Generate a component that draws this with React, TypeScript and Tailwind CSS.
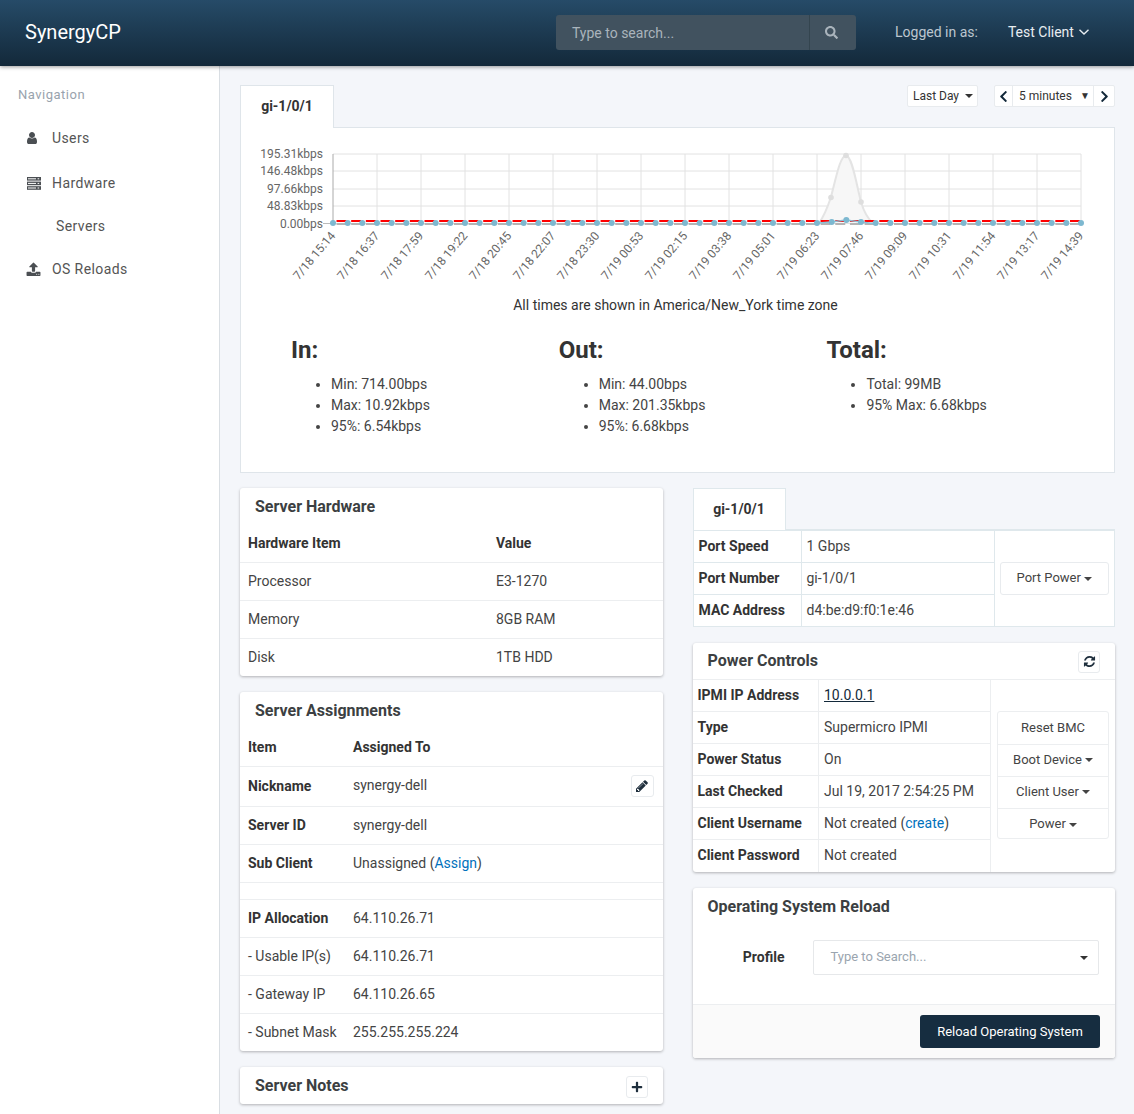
import React from "react";
import { FaSearch, FaChevronLeft, FaChevronRight, FaPlus } from "react-icons/fa";

const Fa4 = ({ d, className = "" }: { d: string; className?: string }) => (
  <svg viewBox="0 0 1792 1792" fill="currentColor" className={className}><path d={d} /></svg>
);
const USER = "M1536 1399q0 109-62.5 187t-150.5 78h-854q-88 0-150.5-78t-62.5-187q0-85 8.5-160.5t31.5-151.5 58.5-130 94-88.5 134.5-34.5q131 128 313 128t313-128q76 0 134.5 34.5t94 88.5 58.5 130 31.5 151.5 8.5 160.5zm-256-887q0 159-112.5 271.5t-271.5 112.5-271.5-112.5-112.5-271.5 112.5-271.5 271.5-112.5 271.5 112.5 112.5 271.5z";
const UPLOAD = "M1344 1472q0-26-19-45t-45-19-45 19-19 45 19 45 45 19 45-19 19-45zm256 0q0-26-19-45t-45-19-45 19-19 45 19 45 45 19 45-19 19-45zm128-224v320q0 40-28 68t-68 28h-1472q-40 0-68-28t-28-68v-320q0-40 28-68t68-28h427q21 56 70.5 92t110.5 36h256q61 0 110.5-36t70.5-92h427q40 0 68 28t28 68zm-325-648q-17 40-59 40h-256v448q0 26-19 45t-45 19h-256q-26 0-45-19t-19-45v-448h-256q-42 0-59-40-17-39 14-69l448-448q18-19 45-19t45 19l448 448q31 30 14 69z";
const REFRESH = "M1639 1056q0 5-1 7-64 268-268 434.5t-478 166.5q-146 0-282.5-55t-243.5-157l-129 129q-19 19-45 19t-45-19-19-45v-448q0-26 19-45t45-19h448q26 0 45 19t19 45-19 45l-137 137q71 66 161 102t187 36q134 0 250-65t186-179q11-17 53-117 8-23 30-23h192q13 0 22.5 9.5t9.5 22.5zm25-800v448q0 26-19 45t-45 19h-448q-26 0-45-19t-19-45 19-45l138-138q-148-137-349-137-134 0-250 65t-186 179q-11 17-53 117-8 23-30 23h-199q-13 0-22.5-9.5t-9.5-22.5v-7q65-268 270-434.5t480-166.5q146 0 284 55.5t245 156.5l130-129q19-19 45-19t45 19 19 45z";
const PENCIL = "M491 1536l91-91-235-235-91 91v107h128v128h107zm523-928q0-22-22-22-10 0-17 7l-542 542q-7 7-7 17 0 22 22 22 10 0 17-7l542-542q7-7 7-17zm-54-192l416 416-832 832h-416v-416zm683 96q0 53-37 90l-166 166-416-416 166-165q36-38 90-38 53 0 91 38l235 234q37 39 37 91z";

const ServerIcon = ({ className = "" }: { className?: string }) => (
  <svg viewBox="0 0 14 13" className={className}>
    {[0, 4.6, 9.2].map((y) => (
      <g key={y}>
        <rect x={0} y={y} width={14} height={3.6} fill="currentColor" />
        <rect x={1} y={y + 1.3} width={8} height={1} fill="#fff" />
        <rect x={10.6} y={y + 1.3} width={1.6} height={1} fill="#fff" />
      </g>
    ))}
  </svg>
);

const Caret = () => (
  <span className="inline-block w-0 h-0 border-t-current border-x-transparent align-middle border-x-[4px] border-t-[4px]" />
);

const labels = ["7/18 15:14","7/18 16:37","7/18 17:59","7/18 19:22","7/18 20:45","7/18 22:07","7/18 23:30","7/19 00:53","7/19 02:15","7/19 03:38","7/19 05:01","7/19 06:23","7/19 07:46","7/19 09:09","7/19 10:31","7/19 11:54","7/19 13:17","7/19 14:39"];
const yTicks: [string, number][] = [["195.31kbps",154],["146.48kbps",171],["97.66kbps",189],["48.83kbps",206],["0.00bps",223.5]];
const blueY: Record<number, number> = { 34: 222, 35: 220, 36: 222 };

function Chart() {
  const xs = labels.map((_, i) => 333 + i * 44);
  const pts = Array.from({ length: 52 }, (_, i) => 333 + (i * 44) / 3);
  return (
    <svg viewBox="241 140 873 150" className="block w-[873px] h-[150px]">
      {yTicks.map(([t, y]) => (
        <g key={t}>
          <line x1={333} x2={1081} y1={y} y2={y} stroke="#e2e2e2" strokeWidth={1} />
          <text x={323} y={y + 4} textAnchor="end" fontSize={12} fill="#666" fontFamily="Roboto, sans-serif">{t}</text>
        </g>
      ))}
      <line x1={323} x2={333} y1={223.5} y2={223.5} stroke="#bbb" strokeWidth={1} />
      {xs.map((x) => (
        <line key={x} x1={x} x2={x} y1={154} y2={223.5} stroke={x === 333 ? "#aaa" : "#e2e2e2"} strokeWidth={1} />
      ))}
      {xs.map((x, i) => (
        <text key={i} x={x + 3} y={236} textAnchor="end" fontSize={12} fill="#666" fontFamily="Roboto, sans-serif" transform={`rotate(-50 ${x + 3} 236)`}>{labels[i]}</text>
      ))}
      <path d="M819 223 C825 215 828 206 831 197 C836 178 840 156 846 155.5 C852 156 856 182 861 202 C864 212 868 219 873 223 Z" fill="#f7f7f7" />
      <path d="M819 223 C825 215 828 206 831 197 C836 178 840 156 846 155.5 C852 156 856 182 861 202 C864 212 868 219 873 223" fill="none" stroke="#e4e4e4" strokeWidth={2} />
      {[[831,197.5],[846,155.5],[861,202]].map(([x,y]) => <circle key={x} cx={x} cy={y} r={2.8} fill="#dedede" />)}
      <line x1={334} x2={1081} y1={221} y2={221} stroke="#ff0000" strokeWidth={2} strokeDasharray="10 4.67" strokeDashoffset={-2.5} />
      <line x1={334} x2={1081} y1={224} y2={224} stroke="#b4b4b4" strokeWidth={2} strokeDasharray="10 4.67" strokeDashoffset={-2.5} />
      <path d="M819 223 L831 222 L846 220 L861 222 L873 223.5" fill="none" stroke="#8dc1d6" strokeWidth={1.5} />
      {pts.map((x, i) => (
        <circle key={i} cx={x} cy={blueY[i] ?? 223} r={3} fill="#7db8d0" />
      ))}
    </svg>
  );
}

const Stat = ({ title, items }: { title: string; items: string[] }) => (
  <div className="w-[267.7px]">
    <h3 className="text-2xl leading-[28px] font-bold text-[#333]">{title}</h3>
    <ul className="list-disc pl-[40px] mt-[10px] text-sm leading-[21px] text-[#444]">
      {items.map((t) => <li key={t}>{t}</li>)}
    </ul>
  </div>
);

const Card = ({ children, className = "" }: { children: React.ReactNode; className?: string }) => (
  <div className={`bg-white rounded-[3px] shadow-[0_1px_3px_rgba(0,0,0,0.28)] ${className}`}>{children}</div>
);

const Title = ({ children }: { children: React.ReactNode }) => (
  <div className="flex items-center justify-between pl-[15px] pr-[15px] h-[37px]">
    <h3 className="text-base font-bold text-[#3c3f42]">{children}</h3>
  </div>
);

const SmallBtn = ({ children, className = "" }: { children: React.ReactNode; className?: string }) => (
  <button className={`w-[22px] h-[22px] flex items-center justify-center bg-white border border-[#e8ebee] rounded-[3px] text-[#1f2f3d] text-[12px] ${className}`}>{children}</button>
);

const A = ({ children }: { children: React.ReactNode }) => <a className="text-[#0071bc]">{children}</a>;

function App() {
  return (
    <div className="h-[1114px] overflow-hidden flex flex-col bg-[#f4f6fa] font-['Roboto',sans-serif] text-sm text-[#444]">
      <header className="relative z-10 h-[66px] shrink-0 flex items-center bg-gradient-to-b from-[#264b68] to-[#13293a] shadow-[0_1px_4px_rgba(0,0,0,0.4)] text-white">
        <div className="w-[556px] pl-[25px] text-[20px] leading-none pb-[3px]">SynergyCP</div>
        <div className="flex w-[300px] h-[35px] mb-[1px] bg-[#41525f] rounded-[3px] text-[#aab4bc]">
          <div className="flex-1 flex items-center pl-[16px] border-r border-[#34454f]">Type to search...</div>
          <div className="w-[46px] pr-[4px] flex items-center justify-center text-[13px]"><FaSearch /></div>
        </div>
        <div className="ml-[39px] text-[#bcc6cf] mb-[2px]">Logged in as:</div>
        <div className="ml-[30px] flex items-center gap-[5px] text-[#e8edf1] mb-[2px]">
          Test Client
          <svg viewBox="0 0 10 6" className="w-[10px] h-[6px]" fill="none" stroke="currentColor" strokeWidth={1.4}><path d="M0.5 0.7 L5 5 L9.5 0.7" /></svg>
        </div>
      </header>
      <div className="flex flex-1 min-h-0">
        <aside className="w-[220px] shrink-0 bg-white border-r border-[#d9dee3] pt-[20px] tracking-[0.4px] text-[#555]">
          <div className="pl-[18px] text-[13px] leading-[17px] text-[#99a3ad] tracking-[0.5px]">Navigation</div>
          <nav className="mt-[13px] flex flex-col">
            <div className="h-[44px] flex items-center pl-[25px]"><Fa4 d={USER} className="w-[14px] h-[14px] text-[#4b4f53] mr-[13px]" /><span>Users</span></div>
            <div className="h-[46px] flex items-center pl-[27px]"><ServerIcon className="w-[14px] h-[13px] text-[#4b4f53] mr-[11px]" /><span>Hardware</span></div>
            <div className="h-[40px] flex items-center pl-[56px]">Servers</div>
            <div className="h-[46px] flex items-center pl-[26px]"><Fa4 d={UPLOAD} className="w-[15px] h-[15px] text-[#4b4f53] mr-[11px]" /><span>OS Reloads</span></div>
          </nav>
        </aside>
        <main className="flex-1 min-w-0 pl-[20px] pr-[19px] pt-[19px]">
          <div className="flex items-start justify-between">
            <div className="h-[43px] w-[94px] pb-[2px] relative z-[1] -mb-px bg-white border border-[#dfe5ea] border-b-0 flex items-center justify-center font-bold text-[#333]">gi-1/0/1</div>
            <div className="flex items-center text-xs text-[#333]">
              <div className="h-[22px] w-[71px] flex items-center justify-center gap-[6px] pl-[1px] bg-white border border-[#e8ebee] rounded-[2px]">Last Day <Caret /></div>
              <div className="ml-[16px] h-[22px] flex bg-white border border-[#e8ebee] rounded-[2px]">
                <div className="w-[18px] flex items-center justify-center border-r border-[#e8ebee] text-[#13293a] text-[13px]"><FaChevronLeft /></div>
                <div className="w-[81px] flex items-center justify-between pl-[6px] pr-[3px] border-r border-[#e8ebee]">5 minutes <span className="text-[10px]">▼</span></div>
                <div className="w-[20px] flex items-center justify-center text-[#13293a] text-[13px]"><FaChevronRight /></div>
              </div>
            </div>
          </div>
          <section className="h-[346px] bg-white border border-[#dfe5ea] pt-[12px]">
            <Chart />
            <p className="mt-[5px] text-center text-[#333] leading-[20px] pr-[4px]">All times are shown in America/New_York time zone</p>
            <div className="flex pl-[50px] mt-[21px]">
              <Stat title="In:" items={["Min: 714.00bps","Max: 10.92kbps","95%: 6.54kbps"]} />
              <Stat title="Out:" items={["Min: 44.00bps","Max: 201.35kbps","95%: 6.68kbps"]} />
              <Stat title="Total:" items={["Total: 99MB","95% Max: 6.68kbps"]} />
            </div>
          </section>

          <div className="grid grid-cols-2 gap-x-[30px] mt-[15px] items-start">
            <div className="flex flex-col gap-[16px]">
              <Card>
                <Title>Server Hardware</Title>
                <table className="w-full border-collapse">
                  <tbody>
                    <tr className="h-[37px] font-bold text-[#333]"><td className="pl-[8px] w-[248px]">Hardware Item</td><td className="pl-[8px]">Value</td></tr>
                    {[["Processor","E3-1270"],["Memory","8GB RAM"],["Disk","1TB HDD"]].map(([a,b]) => (
                      <tr key={a} className="h-[38px] border-t border-[#eceef0]"><td className="pl-[8px]">{a}</td><td className="pl-[8px]">{b}</td></tr>
                    ))}
                  </tbody>
                </table>
              </Card>
              <Card>
                <Title>Server Assignments</Title>
                <table className="w-full border-collapse">
                  <tbody>
                    <tr className="h-[37px] font-bold text-[#333]"><td className="pl-[8px] w-[105px]">Item</td><td className="pl-[8px]" colSpan={2}>Assigned To</td></tr>
                    <tr className="h-[40px] border-t border-[#eceef0]">
                      <td className="pl-[8px] font-bold text-[#333]">Nickname</td>
                      <td className="pl-[8px] pb-[3px]">synergy-dell</td>
                      <td className="w-[40px] pl-[8px]"><SmallBtn className="w-[23px]"><Fa4 d={PENCIL} className="w-[14px] h-[14px]" /></SmallBtn></td>
                    </tr>
                    <tr className="h-[38px] border-t border-[#eceef0]"><td className="pl-[8px] font-bold text-[#333]">Server ID</td><td className="pl-[8px]" colSpan={2}>synergy-dell</td></tr>
                    <tr className="h-[38px] border-t border-[#eceef0]"><td className="pl-[8px] font-bold text-[#333]">Sub Client</td><td className="pl-[8px]" colSpan={2}>Unassigned (<A>Assign</A>)</td></tr>
                    <tr className="h-[17px] border-t border-[#eceef0]"><td colSpan={3} /></tr>
                    <tr className="h-[38px] border-t border-[#eceef0]"><td className="pl-[8px] font-bold text-[#333]">IP Allocation</td><td className="pl-[8px]" colSpan={2}>64.110.26.71</td></tr>
                    <tr className="h-[38px] border-t border-[#eceef0]"><td className="pl-[8px]">- Usable IP(s)</td><td className="pl-[8px]" colSpan={2}>64.110.26.71</td></tr>
                    <tr className="h-[38px] border-t border-[#eceef0]"><td className="pl-[8px]">- Gateway IP</td><td className="pl-[8px]" colSpan={2}>64.110.26.65</td></tr>
                    <tr className="h-[38px] border-t border-[#eceef0]"><td className="pl-[8px]">- Subnet Mask</td><td className="pl-[8px]" colSpan={2}>255.255.255.224</td></tr>
                  </tbody>
                </table>
              </Card>
              <Card>
                <div className="h-[37px] flex items-center justify-between pl-[15px] pr-[15px]">
                  <h3 className="text-base font-bold text-[#3c3f42]">Server Notes</h3>
                  <SmallBtn className="mt-[2px]"><FaPlus /></SmallBtn>
                </div>
              </Card>
            </div>

            <div className="flex flex-col">
              <div className="h-[42px] w-[93px] pb-[2px] relative z-[1] -mb-[1px] bg-white border border-[#dfe8ec] border-b-0 flex items-center justify-center font-bold text-[#333]">gi-1/0/1</div>
              <table className="w-full bg-white border-collapse border-t-2 border-[#dfe8ec]">
                <tbody>
                  {[["Port Speed","1 Gbps"],["Port Number","gi-1/0/1"],["MAC Address","d4:be:d9:f0:1e:46"]].map(([a,b],i) => (
                    <tr key={a} className="h-[32px]">
                      <td className="w-[108px] pl-[5px] border border-[#dfe8ec] font-bold text-[#333]">{a}</td>
                      <td className="w-[193px] pl-[5px] border border-[#dfe8ec]">{b}</td>
                      {i === 0 && (
                        <td rowSpan={3} className="border border-[#dfe8ec] px-[5px] pt-[1px]">
                          <button className="w-full h-[33px] flex items-center justify-center gap-[3px] text-[13px] border border-[#e8ebee] rounded-[3px]">Port Power <Caret /></button>
                        </td>
                      )}
                    </tr>
                  ))}
                </tbody>
              </table>

              <Card className="mt-[16px]">
                <div className="h-[36px] flex items-center justify-between pl-[15px] pr-[15px]">
                  <h3 className="text-base font-bold text-[#3c3f42]">Power Controls</h3>
                  <SmallBtn className="mt-[2px]"><Fa4 d={REFRESH} className="w-[13px] h-[13px]" /></SmallBtn>
                </div>
                <table className="w-full border-collapse">
                  <tbody>
                    {([["IPMI IP Address",<a className="underline text-[#13293a]">10.0.0.1</a>],["Type","Supermicro IPMI"],["Power Status","On"],["Last Checked","Jul 19, 2017 2:54:25 PM"],["Client Username",<>Not created (<A>create</A>)</>],["Client Password","Not created"]] as [string, React.ReactNode][]).map(([a,b],i) => (
                      <tr key={a} className={`border-t border-[#eceef0] ${i === 5 ? "h-[33px]" : "h-[32px]"}`}>
                        <td className="w-[126px] pl-[5px] pb-[1px] border-r border-[#eceef0] font-bold text-[#333]">{a}</td>
                        <td className="w-[172px] pl-[5px] pb-[1px] border-r border-[#eceef0]">{b}</td>
                        {i === 0 && (
                          <td rowSpan={6} className="align-top px-[6px] pt-[31px]">
                            <div className="flex flex-col border border-[#eceef0] rounded-[3px] text-[13px]">
                              <div className="h-[32px] pt-[2px] flex items-center justify-center">Reset BMC</div>
                              <div className="h-[32px] flex items-center justify-center gap-[3px] border-t border-[#eceef0]">Boot Device <Caret /></div>
                              <div className="h-[32px] flex items-center justify-center gap-[3px] border-t border-[#eceef0]">Client User <Caret /></div>
                              <div className="h-[30px] pt-[3px] flex items-center justify-center gap-[3px] border-t border-[#eceef0]">Power <Caret /></div>
                            </div>
                          </td>
                        )}
                      </tr>
                    ))}
                  </tbody>
                </table>
              </Card>

              <Card className="mt-[16px]">
                <Title>Operating System Reload</Title>
                <div className="h-[79px] flex pt-[15px] pl-[15px] pr-[16px]">
                  <div className="w-[77px] h-[35px] pb-[2px] flex items-center justify-end font-bold text-[#333]">Profile</div>
                  <div className="ml-[28px] flex-1 h-[35px] flex items-center justify-between pl-[17px] pr-[10px] border border-[#e6e8ea] rounded-[2px] text-[13px] text-[#9aa5af]">
                    Type to Search...
                    <span className="text-[#333] flex"><Caret /></span>
                  </div>
                </div>
                <div className="h-[54px] flex items-center justify-end pr-[15px] bg-[#fafafa] border-t border-[#eceef0] rounded-b-[3px]">
                  <button className="w-[180px] h-[33px] pt-[1px] bg-[#162d40] text-white text-[13px] rounded-[3px]">Reload Operating System</button>
                </div>
              </Card>
            </div>
          </div>
        </main>
      </div>
    </div>
  );
}

export default App;
